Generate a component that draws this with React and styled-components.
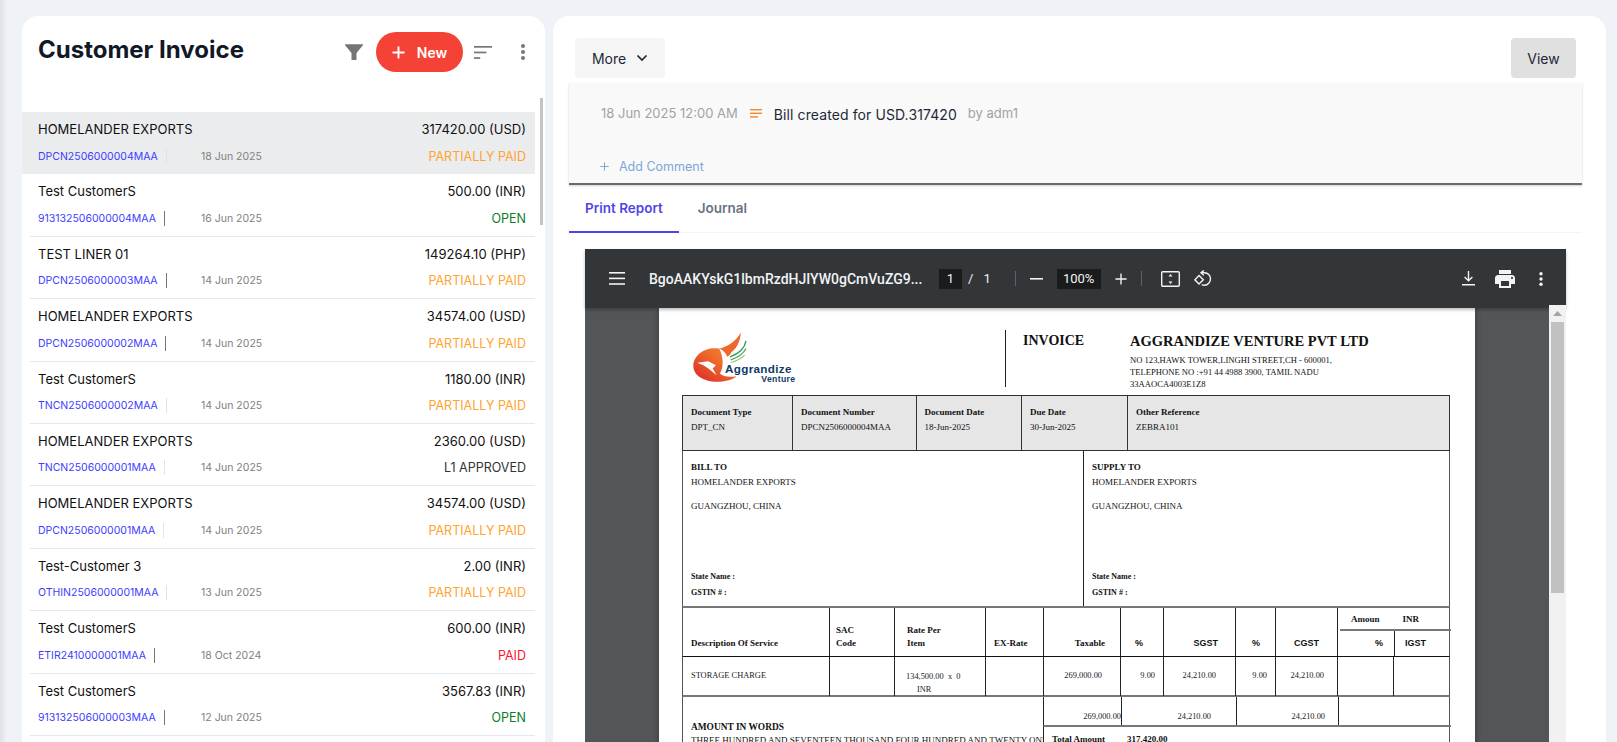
import React from 'react';
import styled, { createGlobalStyle } from 'styled-components';

const Global = createGlobalStyle`
  html, body { margin: 0; padding: 0; height: 742px; overflow: hidden; }
  body { font-family: Inter, "Liberation Sans", sans-serif; background: #eff2f7; }
  * { box-sizing: border-box; }
`;

const Shell = styled.div`
  height: 742px;
  overflow: hidden;
  display: flex;
  gap: 8px;
  padding: 16px 11px 0 22px;
  background: linear-gradient(90deg, #dfe1e5 0, #eff2f7 7px);
`;

const ListCard = styled.section`
  position: relative;
  width: 523px;
  flex: none;
  height: 800px;
  background: #fff;
  border-radius: 16px 16px 0 0;
  padding-right: 10px;
`;

const ListHead = styled.header`
  display: flex;
  align-items: center;
  height: 40px;
  margin: 16px 0 40px;
  padding-left: 16px;
`;

const Title = styled.h1`
  margin: 0 auto 4px 0;
  font-size: 24px;
  line-height: 30px;
  font-weight: 700;
  color: #111827;
`;

const NewButton = styled.button`
  width: 87px;
  height: 40px;
  margin: 0 11px 0 10px;
  display: flex;
  align-items: center;
  justify-content: center;
  gap: 12px;
  border: 0;
  border-radius: 20px;
  background: #f44336;
  color: #fff;
  font: 600 14px Inter, sans-serif;
`;

const DotsSlot = styled.span`
  width: 22px;
  margin: 0 1px 0 20px;
  display: flex;
  justify-content: center;
`;

const Row = styled.article`
  height: 62.4px;
  margin-left: ${p => (p.$selected ? 0 : 8)}px;
  padding: 6px 9px 0 ${p => (p.$selected ? 16 : 8)}px;
  background: ${p => (p.$selected ? '#ebecee' : '#fff')};
  border-bottom: 1px solid ${p => (p.$selected ? '#ebecee' : '#e2e8f0')};
`;

const RowLine = styled.div`
  display: flex;
  align-items: center;
  justify-content: space-between;
  height: 22px;
  & + & { margin-top: 5px; }
`;

const Name = styled.span`
  font-size: 13px;
  color: #111;
`;

const Amount = styled.span`
  font-size: 13px;
  color: #111;
`;

const RefCell = styled.div`
  width: 163px;
  display: flex;
  align-items: center;
  gap: 8px;
`;

const Code = styled.span`
  font-size: 10.5px;
  color: #3d3dff;
`;

const Tick = styled.i`
  display: block;
  width: 1px;
  height: 15px;
  background: ${p => (p.$dark ? '#777' : '#e0e4e8')};
`;

const DateText = styled.span`
  font-size: 10.5px;
  color: #808080;
`;

const Meta = styled.div`
  display: flex;
  align-items: center;
`;

const Status = styled.span`
  font-size: 12.5px;
  color: ${p => p.$color};
`;

const ThinScroll = styled.i`
  position: absolute;
  top: 82px;
  right: 2px;
  width: 3px;
  height: 127px;
  background: #c4c4c4;
`;

const DetailCard = styled.section`
  flex: 1;
  min-width: 0;
  height: 800px;
  background: #fff;
  border-radius: 16px 16px 0 0;
  padding-top: 22px;
`;

const ActionBar = styled.div`
  display: flex;
  justify-content: space-between;
  padding: 0 30px 0 22px;
  margin-bottom: 5px;
`;

const ActionButton = styled.button`
  height: 40px;
  width: ${p => p.$w}px;
  display: flex;
  align-items: center;
  justify-content: center;
  gap: 10px;
  border: 0;
  border-radius: 4px;
  background: ${p => p.$bg};
  color: #1f2937;
  font: 400 14px Inter, sans-serif;
`;

const Log = styled.div`
  margin: 0 24px 0 16px;
  height: 102px;
  padding: 20px 0 0 32px;
  background: #f9f9f9;
  border-bottom: 2px solid #6b6b6b;
  box-shadow: 0 1px 2px rgba(0, 0, 0, 0.18);
`;

const LogLine = styled.div`
  display: flex;
  align-items: center;
  height: 20px;
`;

const LogDate = styled.span`
  font-size: 13px;
  color: #a3a3a3;
  margin-right: 12px;
`;

const LogText = styled.span`
  margin: 2px 11px 0 12px;
  font-size: 14px;
  letter-spacing: 0.1px;
  color: #1f2937;
`;

const LogBy = styled.span`
  font-size: 13px;
  color: #a3a3a3;
`;

const AddComment = styled.div`
  display: flex;
  align-items: center;
  gap: 10px;
  height: 20px;
  margin: 33px 0 0 -1px;
  font-size: 12.5px;
  color: #7ea6d8;
`;

const Tabs = styled.nav`
  display: flex;
  height: 48px;
  margin: 0 24px 16px 16px;
  border-bottom: 1px solid #f3f4f6;
`;

const Tab = styled.a`
  height: 48px;
  padding: 0 ${p => (p.$active ? 16 : 19)}px 0 ${p => (p.$active ? 16 : 19)}px;
  display: flex;
  align-items: center;
  font-size: 13.5px;
  font-weight: 600;
  color: ${p => (p.$active ? '#4f46e5' : '#6b7280')};
  border-bottom: 2px solid ${p => (p.$active ? '#4f46e5' : 'transparent')};
`;

const Viewer = styled.div`
  width: 981px;
  margin-left: 32px;
  background: #525659;
`;

const ViewerBar = styled.div`
  position: relative;
  z-index: 1;
  height: 59px;
  padding: 0 22px 0 24px;
  display: flex;
  align-items: center;
  background: #323639;
  color: #f1f3f4;
  box-shadow: 0 2px 3px rgba(0, 0, 0, 0.25);
  font-family: Roboto, sans-serif;
  font-size: 13px;
`;

const Tool = styled.span`
  flex: none;
  margin-left: ${p => p.$ml || 0}px;
  display: flex;
  align-items: center;
  justify-content: center;
`;

const DocName = styled.span`
  width: 268px;
  flex: none;
  margin-left: 24px;
  font-size: 14px;
  font-weight: 500;
  white-space: nowrap;
`;

const ValueBox = styled.span`
  flex: none;
  width: ${p => p.$w}px;
  height: 20px;
  margin-left: ${p => p.$ml}px;
  background: #191b1c;
  display: flex;
  align-items: center;
  justify-content: center;
`;

const BarRule = styled.i`
  flex: none;
  width: 1px;
  height: 15px;
  margin-left: ${p => p.$ml}px;
  background: #5f6368;
`;

const BarRight = styled.div`
  margin-left: auto;
  display: flex;
  align-items: center;
`;

const ViewerBody = styled.div`
  display: flex;
  height: 600px;
`;

const Gutter = styled.div`
  flex: 1;
  min-width: 0;
  padding: 0 74px;
  background: #525659;
`;

const Sheet = styled.div`
  width: 816px;
  height: 600px;
  padding-left: 23px;
  background: #fff;
  box-shadow: 0 0 6px rgba(0, 0, 0, 0.35);
  font-family: "Liberation Serif", "Times New Roman", serif;
  color: #111;
  font-size: 9px;
`;

const SheetHead = styled.div`
  height: 87px;
  display: grid;
  grid-template-columns: 323px 125px 1fr;
`;

const LogoCell = styled.div`
  padding: 22px 0 0 8px;
`;

const InvoiceCell = styled.div`
  margin-top: 22px;
  height: 57px;
  padding: 3px 0 0 17px;
  border-left: 1px solid #222;
  font-size: 14px;
  font-weight: 700;
  line-height: 16px;
`;

const CompanyCell = styled.div`
  padding-top: 25px;
`;

const CompanyName = styled.div`
  font-size: 14.5px;
  font-weight: 700;
  line-height: 16px;
  margin-bottom: 5px;
  white-space: nowrap;
`;

const AddressLine = styled.div`
  font-size: 8.6px;
  line-height: 12px;
  white-space: nowrap;
`;

const MetaTable = styled.div`
  width: 768px;
  height: 56px;
  display: grid;
  grid-template-columns: 109px 123.5px 105.5px 106px 1fr;
  background: #e6e6e6;
  border: solid #333;
  border-width: 1px;
  border-bottom-width: 1px;
`;

const MetaCell = styled.div`
  padding: 9px 0 0 8px;
  border-left: ${p => (p.$first ? 0 : '1px solid #333')};
  line-height: 15px;
`;

const Strong = styled.div`
  font-weight: 700;
  font-size: ${p => p.$size || 9}px;
`;

const Parties = styled.div`
  width: 768px;
  height: 155px;
  display: grid;
  grid-template-columns: 400px 1fr;
  border: solid #555;
  border-width: 0 1px;
`;

const Party = styled.div`
  display: flex;
  flex-direction: column;
  padding: 9px 0 5px 8px;
  border-left: ${p => (p.$first ? 0 : '1px solid #222')};
  line-height: 15px;
`;

const PartyName = styled.div`
  margin-bottom: 9px;
`;

const PartyFoot = styled.div`
  margin-top: auto;
  font-size: 8px;
  font-weight: 700;
  line-height: 16px;
`;

const cols = '146px 65px 91px 58px 77px 43px 72px 40px 62px 56px 58px';

const ItemHead = styled.div`
  width: 768px;
  height: 51px;
  display: grid;
  grid-template-columns: ${cols};
  border: solid #555;
  border-width: 2px 1px 0;
  border-top-color: #777;
  border-bottom: 1px solid #111;
`;

const ItemRow = styled.div`
  width: 768px;
  height: 40px;
  display: grid;
  grid-template-columns: ${cols};
  border: solid #555;
  border-width: 0 1px 2px;
  border-bottom-color: #777;
`;

const HeadCell = styled.div`
  display: flex;
  align-items: flex-end;
  justify-content: ${p => p.$justify || 'flex-start'};
  padding: 0 ${p => p.$pr || 0}px 6px ${p => p.$pl || 0}px;
  border-left: ${p => (p.$first ? 0 : '1px solid #222')};
  font-weight: 700;
  line-height: 13px;
  font-family: ${p => (p.$sans ? '"Liberation Sans", sans-serif' : 'inherit')};
  white-space: pre-line;
`;

const AmountHead = styled.div`
  grid-column: span 2;
  display: grid;
  grid-template-rows: 23px 1fr;
  border-left: 1px solid #222;
`;

const AmountTop = styled.div`
  display: flex;
  align-items: center;
  justify-content: space-between;
  padding: 0 32px 0 11px;
  margin-left: 2px;
  border-bottom: 2px solid #777;
  font-weight: 700;
  line-height: 12px;
`;

const AmountBottom = styled.div`
  display: grid;
  grid-template-columns: 56px 1fr;
  font-family: "Liberation Sans", sans-serif;
  font-weight: 700;
`;

const AmountSub = styled.div`
  display: flex;
  align-items: flex-end;
  justify-content: ${p => p.$justify || 'flex-start'};
  padding: 0 ${p => p.$pr || 0}px 6px ${p => p.$pl || 0}px;
  border-left: ${p => (p.$first ? 0 : '1px solid #222')};
  line-height: 13px;
`;

const BodyCell = styled.div`
  display: flex;
  justify-content: ${p => p.$justify || 'flex-start'};
  padding: 13px ${p => p.$pr || 0}px 0 ${p => p.$pl || 0}px;
  border-left: ${p => (p.$first ? 0 : '1px solid #222')};
  font-size: 8.4px;
  line-height: 11px;
  color: #222;
`;

const RateLines = styled.div`
  display: flex;
  flex-direction: column;
  line-height: 13px;
`;

const RateUnit = styled.span`
  padding-left: 11px;
`;

const Bottom = styled.div`
  width: 768px;
  display: grid;
  grid-template-columns: 360px 408px;
  border: solid #555;
  border-width: 0 1px;
`;

const Words = styled.div`
  padding: 24px 0 0 8px;
  overflow: hidden;
  white-space: nowrap;
  line-height: 13px;
`;

const TotalsRow = styled.div`
  height: 30px;
  display: grid;
  grid-template-columns: 77px 115px 102px 1fr;
  border-bottom: 2px solid #777;
  border-left: 1px solid #222;
`;

const TotalCell = styled.div`
  display: flex;
  justify-content: ${p => p.$justify || 'flex-end'};
  padding: 14px ${p => p.$pr || 0}px 0 0;
  border-left: ${p => (p.$first ? 0 : '1px solid #222')};
  font-size: 8.4px;
  line-height: 11px;
  color: #222;
`;

const GrandTotal = styled.div`
  height: 30px;
  display: flex;
  gap: 22px;
  padding: 6px 0 0 8px;
  border-left: 1px solid #222;
  font-weight: 700;
  line-height: 13px;
`;

const ScrollTrack = styled.div`
  position: relative;
  z-index: 2;
  width: 17px;
  flex: none;
  margin-top: -3px;
  padding: 0 2px;
  background: #f1f1f1;
`;

const ScrollUp = styled.div`
  height: 17px;
  display: flex;
  align-items: center;
  justify-content: center;
`;

const ScrollThumb = styled.div`
  height: 271px;
  background: #c1c1c1;
`;

const Plus = ({ size = 14, width = 2, color = 'currentColor' }) => (
  <svg width={size} height={size} viewBox="0 0 14 14" fill="none" stroke={color} strokeWidth={width}>
    <path d="M7 0.5v13M0.5 7h13" />
  </svg>
);

const FilterIcon = () => (
  <svg width="24" height="24" viewBox="0 0 24 24" fill="#757575">
    <path d="M3.6 4.2h16.8c.5 0 .8.6.5 1L14.5 13v7h-5v-7L3.1 5.2c-.3-.4 0-1 .5-1z" />
  </svg>
);

const SortIcon = () => (
  <svg width="18" height="13" viewBox="0 0 18 13" fill="#757575">
    <rect width="18" height="1.7" />
    <rect y="5.6" width="12.4" height="1.7" />
    <rect y="11.2" width="6.2" height="1.7" />
  </svg>
);

const Dots = ({ color = '#757575', h = 16, r = 2 }) => (
  <svg width="6" height={h} viewBox={`0 0 6 ${h}`} fill={color}>
    <circle cx="3" cy={r} r={r} />
    <circle cx="3" cy={h / 2} r={r} />
    <circle cx="3" cy={h - r} r={r} />
  </svg>
);

const Chevron = () => (
  <svg width="12" height="8" viewBox="0 0 12 8" fill="none" stroke="#1f2937" strokeWidth="1.7">
    <path d="M1.5 1.5 6 6l4.5-4.5" />
  </svg>
);

const LinesIcon = () => (
  <svg width="12" height="9" viewBox="0 0 12 9" fill="#f08a2c">
    <rect width="12" height="1.4" />
    <rect y="3.6" width="12" height="1.4" />
    <rect y="7.2" width="8" height="1.4" />
  </svg>
);

const MenuIcon = () => (
  <svg width="16" height="13" viewBox="0 0 16 13" fill="#f1f3f4">
    <rect width="16" height="1.6" />
    <rect y="5.6" width="16" height="1.6" />
    <rect y="11.2" width="16" height="1.6" />
  </svg>
);

const FitIcon = () => (
  <svg width="19" height="16" viewBox="0 0 19 16" fill="none" stroke="#f1f3f4" strokeWidth="1.4">
    <rect x="0.7" y="0.7" width="17.6" height="14.6" rx="1" />
    <path d="M9.5 3l2 2.6h-4zM9.5 13l2-2.6h-4z" fill="#f1f3f4" stroke="none" />
  </svg>
);

const RotateIcon = () => (
  <svg width="18" height="18" viewBox="0 0 18 18" fill="none" stroke="#f1f3f4" strokeWidth="1.4">
    <path d="M5 5.6 9.3 9.8 5 14 .9 9.8z" />
    <path d="M7 2.8h3.5c3.4 0 6 2.6 6 6s-2.6 6.5-6 6.5c-1 0-2-.2-2.8-.7" />
    <path d="M9.8.4 7 2.8l2.8 2.5" />
  </svg>
);

const DownloadIcon = () => (
  <svg width="13" height="15" viewBox="0 0 13 15" fill="none" stroke="#f1f3f4" strokeWidth="1.4">
    <path d="M6.5 0v9.5M2.6 6l3.9 3.8L10.4 6M0 13.8h13" />
  </svg>
);

const PrintIcon = () => (
  <svg width="20" height="20" viewBox="2 2.4 20 19" fill="#f1f3f4">
    <path d="M19 8H5c-1.66 0-3 1.34-3 3v6h4v4h12v-4h4v-6c0-1.66-1.34-3-3-3zm-3 11H8v-5h8v5zm3-7c-.55 0-1-.45-1-1s.45-1 1-1 1 .45 1 1-.45 1-1 1zm-1-9H6v4h12V3z" />
  </svg>
);

const Logo = () => (
  <svg width="120" height="57" viewBox="150 90 360 170">
    <defs>
      <linearGradient id="flame" x1="0" y1="1" x2="1" y2="0">
        <stop offset="0" stopColor="#d9262a" />
        <stop offset="0.6" stopColor="#ef6a2b" />
        <stop offset="1" stopColor="#f58d3a" />
      </linearGradient>
    </defs>
    <path d="M238 145C195 138 160 165 160 197c0 31 35 49 75 48 23-1 43-7 55-17-22 4-40 2-50-8 12-20 10-50-2-75z" fill="url(#flame)" />
    <path d="M303 97c-3 28-13 53-41 73-4-10-12-20-24-25 27-5 52-25 65-48z" fill="#f0672c" />
    <path d="M305 105c-2 20-12 38-33 54" fill="none" stroke="#fff" strokeWidth="3" />
    <path d="M318 122c-4 22-20 38-48 48" fill="none" stroke="#2e9a55" strokeWidth="4" />
    <path d="M318 145c-8 16-24 27-46 34" fill="none" stroke="#4aa862" strokeWidth="4" />
    <path d="M314 165c-10 10-24 18-42 22" fill="none" stroke="#9bbf74" strokeWidth="3.5" />
    <path d="M172 188l33-5 23 12-10 10 12 20-25-20-15-10z" fill="#fff" />
    <text x="255" y="220" fontFamily='"Liberation Sans", sans-serif' fontWeight="700" fontSize="35" letterSpacing="1" fill="#123a66">Aggrandize</text>
    <text x="364" y="245" fontFamily='"Liberation Sans", sans-serif' fontWeight="700" fontSize="26" letterSpacing="1" fill="#123a66">Venture</text>
  </svg>
);

const invoices = [
  { name: 'HOMELANDER EXPORTS', amount: '317420.00 (USD)', code: 'DPCN2506000004MAA', date: '18 Jun 2025', status: 'PARTIALLY PAID', selected: true },
  { name: 'Test CustomerS', amount: '500.00 (INR)', code: '913132506000004MAA', date: '16 Jun 2025', status: 'OPEN', dark: true },
  { name: 'TEST LINER 01', amount: '149264.10 (PHP)', code: 'DPCN2506000003MAA', date: '14 Jun 2025', status: 'PARTIALLY PAID', dark: true },
  { name: 'HOMELANDER EXPORTS', amount: '34574.00 (USD)', code: 'DPCN2506000002MAA', date: '14 Jun 2025', status: 'PARTIALLY PAID', dark: true },
  { name: 'Test CustomerS', amount: '1180.00 (INR)', code: 'TNCN2506000002MAA', date: '14 Jun 2025', status: 'PARTIALLY PAID' },
  { name: 'HOMELANDER EXPORTS', amount: '2360.00 (USD)', code: 'TNCN2506000001MAA', date: '14 Jun 2025', status: 'L1 APPROVED' },
  { name: 'HOMELANDER EXPORTS', amount: '34574.00 (USD)', code: 'DPCN2506000001MAA', date: '14 Jun 2025', status: 'PARTIALLY PAID' },
  { name: 'Test-Customer 3', amount: '2.00 (INR)', code: 'OTHIN2506000001MAA', date: '13 Jun 2025', status: 'PARTIALLY PAID' },
  { name: 'Test CustomerS', amount: '600.00 (INR)', code: 'ETIR2410000001MAA', date: '18 Oct 2024', status: 'PAID', dark: true },
  { name: 'Test CustomerS', amount: '3567.83 (INR)', code: '913132506000003MAA', date: '12 Jun 2025', status: 'OPEN', dark: true },
];

const statusColors = {
  'PARTIALLY PAID': '#ffa42e',
  OPEN: '#0b7d2a',
  PAID: '#ff1030',
  'L1 APPROVED': '#333333',
};

const metaCells = [
  ['Document Type', 'DPT_CN'],
  ['Document Number', 'DPCN2506000004MAA'],
  ['Document Date', '18-Jun-2025'],
  ['Due Date', '30-Jun-2025'],
  ['Other Reference', 'ZEBRA101'],
];

export default function App() {
  return (
    <>
      <Global />
      <Shell>
        <ListCard>
          <ListHead>
            <Title>Customer Invoice</Title>
            <FilterIcon />
            <NewButton><Plus size={13} /> New</NewButton>
            <SortIcon />
            <DotsSlot><Dots /></DotsSlot>
          </ListHead>
          {invoices.map((inv, i) => (
            <Row key={i} $selected={inv.selected}>
              <RowLine>
                <Name>{inv.name}</Name>
                <Amount>{inv.amount}</Amount>
              </RowLine>
              <RowLine>
                <Meta>
                  <RefCell>
                    <Code>{inv.code}</Code>
                    <Tick $dark={inv.dark} />
                  </RefCell>
                  <DateText>{inv.date}</DateText>
                </Meta>
                <Status $color={statusColors[inv.status]}>{inv.status}</Status>
              </RowLine>
            </Row>
          ))}
          <ThinScroll />
        </ListCard>

        <DetailCard>
          <ActionBar>
            <ActionButton $w={90} $bg="#f5f5f5">More <Chevron /></ActionButton>
            <ActionButton $w={65} $bg="#e0e0e0">View</ActionButton>
          </ActionBar>
          <Log>
            <LogLine>
              <LogDate>18 Jun 2025 12:00 AM</LogDate>
              <LinesIcon />
              <LogText>Bill created for USD.317420</LogText>
              <LogBy>by adm1</LogBy>
            </LogLine>
            <AddComment>
              <Plus size={9} width={1.6} color="#7ea6d8" />
              Add Comment
            </AddComment>
          </Log>
          <Tabs>
            <Tab $active>Print Report</Tab>
            <Tab>Journal</Tab>
          </Tabs>
          <Viewer>
            <ViewerBar>
              <Tool><MenuIcon /></Tool>
              <DocName>BgoAAKYskG1lbmRzdHJIYW0gCmVuZG9...</DocName>
              <ValueBox $w={23} $ml={22}>1</ValueBox>
              <Tool $ml={6}>/</Tool>
              <Tool $ml={10}>1</Tool>
              <BarRule $ml={24} />
              <Tool $ml={14}><svg width="13" height="2" viewBox="0 0 13 2" fill="#f1f3f4"><rect width="13" height="1.6" /></svg></Tool>
              <ValueBox $w={44} $ml={14}>100%</ValueBox>
              <Tool $ml={14}><Plus size={12} width={1.6} /></Tool>
              <BarRule $ml={14} />
              <Tool $ml={19}><FitIcon /></Tool>
              <Tool $ml={14}><RotateIcon /></Tool>
              <BarRight>
                <Tool><DownloadIcon /></Tool>
                <Tool $ml={20}><PrintIcon /></Tool>
                <Tool $ml={23}><Dots color="#f1f3f4" h={14} r={1.7} /></Tool>
              </BarRight>
            </ViewerBar>
            <ViewerBody>
              <Gutter>
                <Sheet>
                  <SheetHead>
                    <LogoCell><Logo /></LogoCell>
                    <InvoiceCell>INVOICE</InvoiceCell>
                    <CompanyCell>
                      <CompanyName>AGGRANDIZE VENTURE PVT LTD</CompanyName>
                      <AddressLine>NO 123,HAWK TOWER,LINGHI STREET,CH - 600001,</AddressLine>
                      <AddressLine>TELEPHONE NO :+91 44 4988 3900, TAMIL NADU</AddressLine>
                      <AddressLine>33AAOCA4003E1Z8</AddressLine>
                    </CompanyCell>
                  </SheetHead>
                  <MetaTable>
                    {metaCells.map(([label, value], i) => (
                      <MetaCell key={label} $first={i === 0}>
                        <Strong>{label}</Strong>
                        <div>{value}</div>
                      </MetaCell>
                    ))}
                  </MetaTable>
                  <Parties>
                    {['BILL TO', 'SUPPLY TO'].map((label, i) => (
                      <Party key={label} $first={i === 0}>
                        <Strong>{label}</Strong>
                        <PartyName>HOMELANDER EXPORTS</PartyName>
                        <div>GUANGZHOU, CHINA</div>
                        <PartyFoot>
                          <div>State Name :</div>
                          <div>GSTIN # :</div>
                        </PartyFoot>
                      </Party>
                    ))}
                  </Parties>
                  <ItemHead>
                    <HeadCell $first $pl={8}>Description Of Service</HeadCell>
                    <HeadCell $pl={6}>{'SAC\nCode'}</HeadCell>
                    <HeadCell $pl={12}>{'Rate Per\nItem'}</HeadCell>
                    <HeadCell $pl={8}>EX-Rate</HeadCell>
                    <HeadCell $justify="flex-end" $pr={15}>Taxable</HeadCell>
                    <HeadCell $pl={14} $sans>%</HeadCell>
                    <HeadCell $justify="flex-end" $pr={17} $sans>SGST</HeadCell>
                    <HeadCell $pl={16} $sans>%</HeadCell>
                    <HeadCell $justify="flex-end" $pr={18} $sans>CGST</HeadCell>
                    <AmountHead>
                      <AmountTop><span>Amoun</span><span>INR</span></AmountTop>
                      <AmountBottom>
                        <AmountSub $first $justify="flex-end" $pr={11}>%</AmountSub>
                        <AmountSub $pl={10}>IGST</AmountSub>
                      </AmountBottom>
                    </AmountHead>
                  </ItemHead>
                  <ItemRow>
                    <BodyCell $first $pl={8}>STORAGE CHARGE</BodyCell>
                    <BodyCell />
                    <BodyCell $pl={11}>
                      <RateLines>
                        <span>134,500.00 &nbsp;x &nbsp;0</span>
                        <RateUnit>INR</RateUnit>
                      </RateLines>
                    </BodyCell>
                    <BodyCell />
                    <BodyCell $justify="flex-end" $pr={18}>269,000.00</BodyCell>
                    <BodyCell $justify="flex-end" $pr={8}>9.00</BodyCell>
                    <BodyCell $justify="flex-end" $pr={19}>24,210.00</BodyCell>
                    <BodyCell $justify="flex-end" $pr={8}>9.00</BodyCell>
                    <BodyCell $justify="flex-end" $pr={13}>24,210.00</BodyCell>
                    <BodyCell />
                    <BodyCell />
                  </ItemRow>
                  <Bottom>
                    <Words>
                      <Strong $size={9.4}>AMOUNT IN WORDS</Strong>
                      <div>THREE HUNDRED AND SEVENTEEN THOUSAND FOUR HUNDRED AND TWENTY ONLY</div>
                    </Words>
                    <div>
                      <TotalsRow>
                        <TotalCell $first $pr={0}>269,000.00</TotalCell>
                        <TotalCell $pr={25}>24,210.00</TotalCell>
                        <TotalCell $pr={13}>24,210.00</TotalCell>
                        <TotalCell />
                      </TotalsRow>
                      <GrandTotal>
                        <span>Total Amount</span>
                        <span>317,420.00</span>
                      </GrandTotal>
                    </div>
                  </Bottom>
                </Sheet>
              </Gutter>
              <ScrollTrack>
                <ScrollUp>
                  <svg width="9" height="5" viewBox="0 0 9 5" fill="#a3a3a3"><path d="M4.5 0 9 5H0z" /></svg>
                </ScrollUp>
                <ScrollThumb />
              </ScrollTrack>
            </ViewerBody>
          </Viewer>
        </DetailCard>
      </Shell>
    </>
  );
}
